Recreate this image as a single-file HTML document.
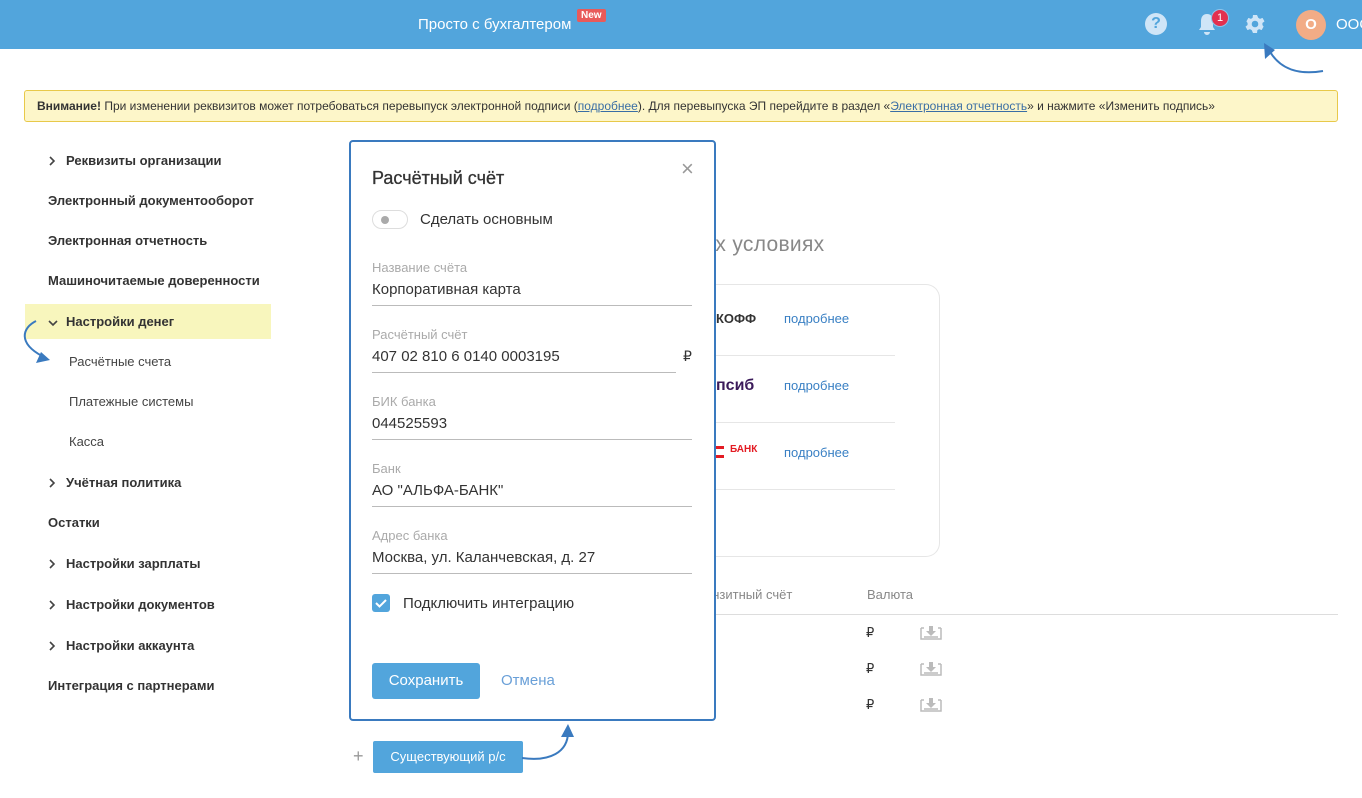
<!DOCTYPE html>
<html><head><meta charset="utf-8"><style>
*{box-sizing:border-box;margin:0;padding:0}
body{width:1362px;height:798px;overflow:hidden;background:#fff;font-family:"Liberation Sans","DejaVu Sans",sans-serif;color:#333;position:relative}
.abs{position:absolute}
.hdr{left:0;top:0;width:1362px;height:49px;background:#52a5dc}
.warn{left:24px;top:90px;width:1314px;height:32px;background:#fdf6c9;border:1px solid #e8c94a;border-radius:3px;font-size:12px;line-height:30px;padding-left:12px;color:#333}
.warn a{color:#3a6ea5;text-decoration:underline}
.nav{font-size:13px;font-weight:bold;color:#333}
.sub{font-size:13px;color:#444}
.chev{display:inline-block;width:18px;vertical-align:middle}
.modal{left:349px;top:140px;width:367px;height:581px;background:#fff;border:2px solid #3a7abf;border-radius:4px}
.lbl{font-size:13px;color:#aaa;left:21px}
.val{font-size:15px;color:#333;left:21px}
.line{left:21px;width:320px;height:1px;background:#bbb}
.lnk{color:#3a80c4;font-size:13px}
</style></head><body>
<div class="abs hdr"></div>
<div class="abs" style="left:418px;top:16px;color:#fff;font-size:15px">Просто с бухгалтером</div>
<div class="abs" style="left:577px;top:9px;background:#e85a5a;color:#fff;font-size:10px;font-weight:bold;padding:1px 4px;border-radius:2px">New</div>
<div class="abs" style="left:1145px;top:13px;width:22px;height:22px;border-radius:50%;background:#cfe5f7;color:#52a5dc;font-weight:bold;font-size:16px;text-align:center;line-height:22px">?</div>
<svg class="abs" style="left:1196px;top:12px" width="22" height="24" viewBox="0 0 22 24"><path d="M11 2c-4 0-6 3-6 7v6l-2 3h16l-2-3V9c0-4-2-7-6-7z M8 20h6a3 3 0 0 1-6 0z" fill="#cfe5f7"/></svg>
<div class="abs" style="left:1211px;top:9px;width:18px;height:18px;border-radius:50%;background:#e3304f;border:1px solid #8fc3ea;color:#fff;font-size:11px;text-align:center;line-height:16px">1</div>
<svg class="abs" style="left:1243px;top:12px" width="24" height="24" viewBox="0 0 24 24"><path fill="#cfe5f7" fill-rule="evenodd" d="M19.4 13a7.5 7.5 0 0 0 0-2l2.1-1.6-2-3.5-2.5 1a7 7 0 0 0-1.7-1L14 3h-4l-.4 2.9a7 7 0 0 0-1.7 1l-2.5-1-2 3.5L4.6 11a7.5 7.5 0 0 0 0 2l-2.1 1.6 2 3.5 2.5-1a7 7 0 0 0 1.7 1L10 21h4l.4-2.9a7 7 0 0 0 1.7-1l2.5 1 2-3.5zM12 15.3a3.3 3.3 0 1 1 0-6.6 3.3 3.3 0 0 1 0 6.6z"/></svg>
<div class="abs" style="left:1296px;top:10px;width:30px;height:30px;border-radius:50%;background:#f2ac86;color:#fff;font-weight:bold;font-size:15px;text-align:center;line-height:30px">О</div>
<div class="abs" style="left:1336px;top:16px;color:#fff;font-size:15px">ООО</div>
<svg class="abs" style="left:1255px;top:40px" width="75" height="40"><path d="M68 31C45 35 25 30 14 10" stroke="#3a7abf" stroke-width="2" fill="none"/><path d="M9 3l1 16 10-9z" fill="#3a7abf"/></svg>

<div class="abs warn"><b>Внимание!</b> При изменении реквизитов может потребоваться перевыпуск электронной подписи (<a>подробнее</a>). Для перевыпуска ЭП перейдите в раздел «<a>Электронная отчетность</a>» и нажмите «Изменить подпись»</div>

<div class="abs" style="left:25px;top:304px;width:246px;height:35px;background:#f8f6bd"></div>
<div class="abs nav" style="left:48px;top:153px"><span class="chev"><svg width="8" height="10"><path d="M2 1l4 4-4 4" stroke="#444" stroke-width="1.6" fill="none"/></svg></span>Реквизиты организации</div>
<div class="abs nav" style="left:48px;top:193px">Электронный документооборот</div>
<div class="abs nav" style="left:48px;top:233px">Электронная отчетность</div>
<div class="abs nav" style="left:48px;top:273px">Машиночитаемые доверенности</div>
<div class="abs nav" style="left:48px;top:314px"><span class="chev"><svg width="10" height="8"><path d="M1 2l4 4 4-4" stroke="#444" stroke-width="1.6" fill="none"/></svg></span>Настройки денег</div>
<div class="abs sub" style="left:69px;top:354px">Расчётные счета</div>
<div class="abs sub" style="left:69px;top:394px">Платежные системы</div>
<div class="abs sub" style="left:69px;top:434px">Касса</div>
<div class="abs nav" style="left:48px;top:475px"><span class="chev"><svg width="8" height="10"><path d="M2 1l4 4-4 4" stroke="#444" stroke-width="1.6" fill="none"/></svg></span>Учётная политика</div>
<div class="abs nav" style="left:48px;top:515px">Остатки</div>
<div class="abs nav" style="left:48px;top:556px"><span class="chev"><svg width="8" height="10"><path d="M2 1l4 4-4 4" stroke="#444" stroke-width="1.6" fill="none"/></svg></span>Настройки зарплаты</div>
<div class="abs nav" style="left:48px;top:597px"><span class="chev"><svg width="8" height="10"><path d="M2 1l4 4-4 4" stroke="#444" stroke-width="1.6" fill="none"/></svg></span>Настройки документов</div>
<div class="abs nav" style="left:48px;top:638px"><span class="chev"><svg width="8" height="10"><path d="M2 1l4 4-4 4" stroke="#444" stroke-width="1.6" fill="none"/></svg></span>Настройки аккаунта</div>
<div class="abs nav" style="left:48px;top:678px">Интеграция с партнерами</div>
<svg class="abs" style="left:14px;top:318px" width="40" height="50"><path d="M22 3C8 10 4 25 28 38" stroke="#3a7abf" stroke-width="2" fill="none"/><path d="M36 42l-14 3 5-11z" fill="#3a7abf"/></svg>

<div class="abs" style="left:700px;top:233px;font-size:21px;color:#888;letter-spacing:0.3px">ых условиях</div>
<div class="abs" style="left:690px;top:284px;width:250px;height:273px;border:1px solid #e6e6e6;border-radius:14px;border-left:none"></div>
<div class="abs" style="left:716px;top:311px;font-weight:bold;font-size:13px;color:#333">КОФФ</div>
<div class="abs lnk" style="left:784px;top:311px">подробнее</div>
<div class="abs" style="left:700px;top:355px;width:195px;height:1px;background:#e6e6e6"></div>
<div class="abs" style="left:716px;top:377px;font-weight:bold;font-size:16px;color:#3b1a5a">псиб</div>
<div class="abs lnk" style="left:784px;top:378px">подробнее</div>
<div class="abs" style="left:700px;top:422px;width:195px;height:1px;background:#e6e6e6"></div>
<div class="abs" style="left:716px;top:446px;width:8px;height:3px;background:#e31b23"></div>
<div class="abs" style="left:716px;top:455px;width:8px;height:3px;background:#e31b23"></div>
<div class="abs" style="left:730px;top:444px;font-weight:bold;font-size:10px;color:#e31b23">БАНК</div>
<div class="abs lnk" style="left:784px;top:445px">подробнее</div>
<div class="abs" style="left:700px;top:489px;width:195px;height:1px;background:#e6e6e6"></div>

<div class="abs" style="left:705px;top:587px;font-size:13px;color:#888">анзитный счёт</div>
<div class="abs" style="left:867px;top:587px;font-size:13px;color:#888">Валюта</div>
<div class="abs" style="left:700px;top:614px;width:638px;height:1px;background:#ddd"></div>
<div class="abs" style="left:866px;top:625px;font-size:13px">₽</div>
<div class="abs" style="left:866px;top:661px;font-size:13px">₽</div>
<div class="abs" style="left:866px;top:697px;font-size:13px">₽</div>
<svg class="abs" style="left:920px;top:625px" width="22" height="15"><path d="M1 3v11h20V3M4 3H1M21 3h-3" stroke="#bbb" fill="none" stroke-width="1.5"/><path d="M9 1h4v5h3l-5 5-5-5h3z" fill="#bbb"/><rect x="4" y="11" width="14" height="2" fill="#ccc"/></svg>
<svg class="abs" style="left:920px;top:661px" width="22" height="15"><path d="M1 3v11h20V3M4 3H1M21 3h-3" stroke="#bbb" fill="none" stroke-width="1.5"/><path d="M9 1h4v5h3l-5 5-5-5h3z" fill="#bbb"/><rect x="4" y="11" width="14" height="2" fill="#ccc"/></svg>
<svg class="abs" style="left:920px;top:697px" width="22" height="15"><path d="M1 3v11h20V3M4 3H1M21 3h-3" stroke="#bbb" fill="none" stroke-width="1.5"/><path d="M9 1h4v5h3l-5 5-5-5h3z" fill="#bbb"/><rect x="4" y="11" width="14" height="2" fill="#ccc"/></svg>

<div class="abs" style="left:353px;top:746px;font-size:18px;color:#999">+</div>
<div class="abs" style="left:373px;top:741px;width:150px;height:32px;background:#52a5dc;border-radius:2px;color:#fff;font-size:13px;text-align:center;line-height:32px">Существующий р/с</div>
<svg class="abs" style="left:520px;top:722px" width="60" height="40"><path d="M2 36C30 40 48 30 48 10" stroke="#3a7abf" stroke-width="2" fill="none"/><path d="M48 2l-7 13h13z" fill="#3a7abf"/></svg>

<div class="abs modal">
<div class="abs" style="left:21px;top:26px;font-size:18px;color:#333;-webkit-text-stroke:0.3px #333">Расчётный счёт</div>
<div class="abs" style="left:330px;top:14px;font-size:22px;color:#999">×</div>
<div class="abs" style="left:21px;top:68px;width:36px;height:19px;border:1px solid #ddd;border-radius:10px"><div style="position:absolute;left:8px;top:5px;width:8px;height:8px;border-radius:50%;background:#aaa"></div></div>
<div class="abs" style="left:69px;top:69px;font-size:15px">Сделать основным</div>
<div class="abs lbl" style="top:118px">Название счёта</div>
<div class="abs val" style="top:139px">Корпоративная карта</div>
<div class="abs line" style="top:163px"></div>
<div class="abs lbl" style="top:185px">Расчётный счёт</div>
<div class="abs val" style="top:206px">407 02 810 6 0140 0003195</div>
<div class="abs" style="left:332px;top:206px;font-size:14px">₽</div>
<div class="abs line" style="top:230px;width:304px"></div>
<div class="abs lbl" style="top:252px">БИК банка</div>
<div class="abs val" style="top:273px">044525593</div>
<div class="abs line" style="top:297px"></div>
<div class="abs lbl" style="top:319px">Банк</div>
<div class="abs val" style="top:340px">АО "АЛЬФА-БАНК"</div>
<div class="abs line" style="top:364px"></div>
<div class="abs lbl" style="top:386px">Адрес банка</div>
<div class="abs val" style="top:407px">Москва, ул. Каланчевская, д. 27</div>
<div class="abs line" style="top:431px"></div>
<div class="abs" style="left:21px;top:452px;width:18px;height:18px;background:#52a5dc;border-radius:3px"><svg width="18" height="18"><path d="M4 9l3.5 3.5L14 6" stroke="#fff" stroke-width="2" fill="none"/></svg></div>
<div class="abs" style="left:52px;top:453px;font-size:15px">Подключить интеграцию</div>
<div class="abs" style="left:21px;top:521px;width:108px;height:36px;background:#52a5dc;border-radius:3px;color:#fff;font-size:15px;text-align:center;line-height:36px">Сохранить</div>
<div class="abs" style="left:150px;top:530px;font-size:15px;color:#6aa0d8">Отмена</div>
</div>
</body></html>
